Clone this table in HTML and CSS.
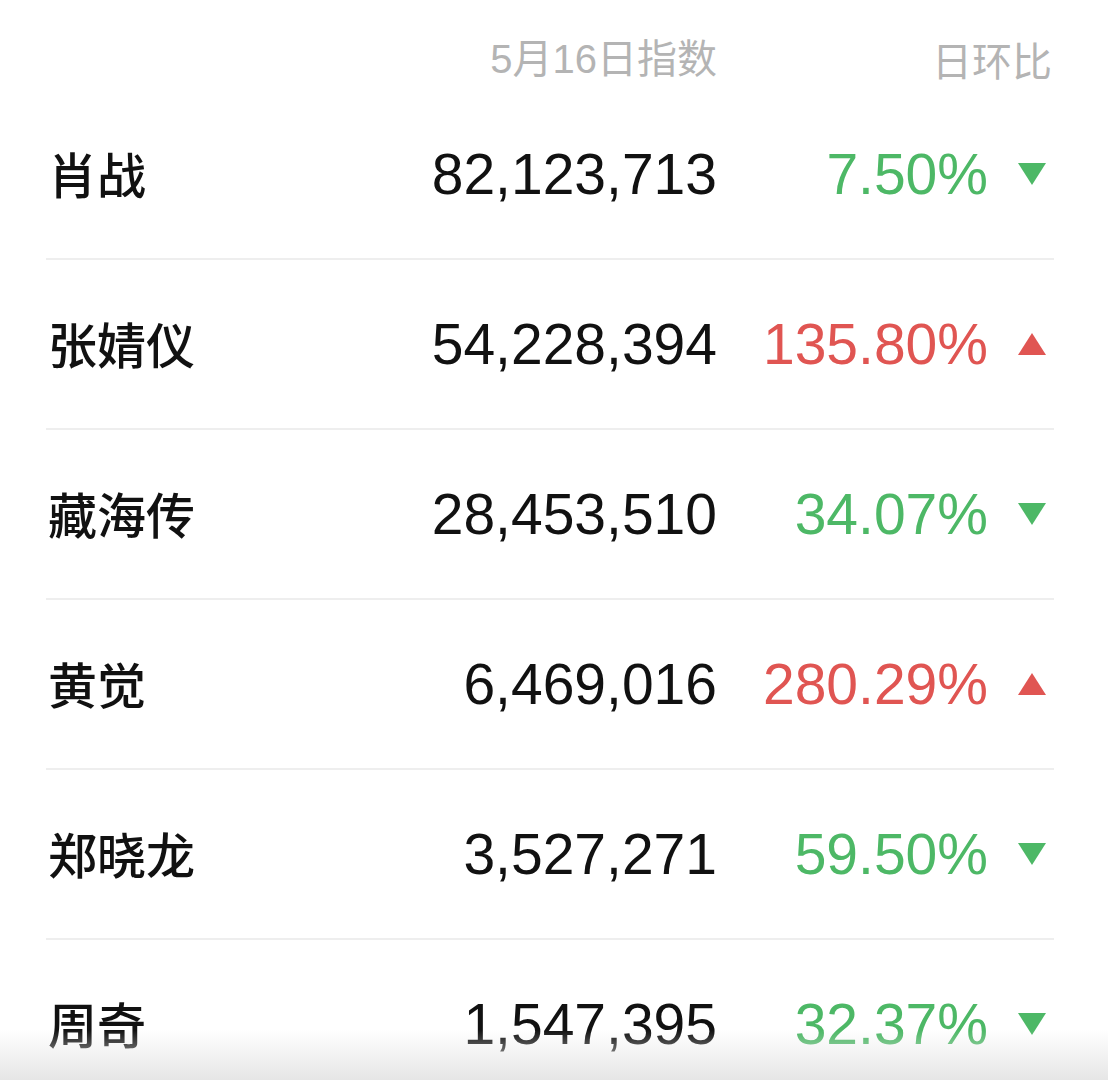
FILE: index.html
```html
<!DOCTYPE html>
<html>
<head>
    <title>指数</title>
    <link rel="stylesheet" href="styles.css">
</head>
<body>
    <div class="board">
        <div class="head">
            <span></span>
            <span class="head-num">5月16日指数</span>
            <span class="head-rate">日环比</span>
        </div>

        <div class="row">
            <span class="name">肖战</span>
            <span class="num">82,123,713</span>
            <span class="rate down">7.50%</span>
            <span class="arrow"><span class="tri down"></span></span>
        </div>
        <div class="row">
            <span class="name">张婧仪</span>
            <span class="num">54,228,394</span>
            <span class="rate up">135.80%</span>
            <span class="arrow"><span class="tri up"></span></span>
        </div>
        <div class="row">
            <span class="name">藏海传</span>
            <span class="num">28,453,510</span>
            <span class="rate down">34.07%</span>
            <span class="arrow"><span class="tri down"></span></span>
        </div>
        <div class="row">
            <span class="name">黄觉</span>
            <span class="num">6,469,016</span>
            <span class="rate up">280.29%</span>
            <span class="arrow"><span class="tri up"></span></span>
        </div>
        <div class="row">
            <span class="name">郑晓龙</span>
            <span class="num">3,527,271</span>
            <span class="rate down">59.50%</span>
            <span class="arrow"><span class="tri down"></span></span>
        </div>
        <div class="row last">
            <span class="name">周奇</span>
            <span class="num">1,547,395</span>
            <span class="rate down">32.37%</span>
            <span class="arrow"><span class="tri down"></span></span>
        </div>
    </div>
    <div class="fade"></div>
</body>
</html>
```

FILE: styles.css
```css
body {
    margin: 0;
    padding: 0;
    background-color: #fff;
    font-family: "Liberation Sans", "Noto Sans CJK SC", sans-serif;
    color: #111;
    width: 1108px;
    height: 1080px;
    overflow: hidden;
    position: relative;
}

.board {
    margin-left: 46px;
    width: 1008px;
}

.head,
.row {
    display: grid;
    grid-template-columns: 371px 300px 271px 66px;
    align-items: center;
}

.head {
    height: 62px;
    padding-top: 28px;
    font-family: "Noto Sans CJK SC", "Liberation Sans", sans-serif;
    font-size: 40px;
    line-height: 44px;
    color: #b4b4b4;
}

.head-num {
    text-align: right;
    font-family: "Liberation Sans", "Noto Sans CJK SC", sans-serif;
}

.head-rate {
    grid-column: 3 / 5;
    text-align: right;
    padding-right: 2px;
}

.row {
    height: 168px;
    border-bottom: 2px solid #eeeeee;
}

.row.last {
    border-bottom: none;
}

.name {
    font-family: "Noto Sans CJK SC", sans-serif;
    font-size: 49px;
    font-weight: 500;
    padding-left: 2px;
    position: relative;
    top: -2px;
}

.num {
    text-align: right;
    font-size: 57px;
}

.rate {
    text-align: right;
    font-size: 57px;
}

.rate.down {
    color: #4db866;
}

.rate.up {
    color: #e05552;
}

.arrow {
    padding-left: 30px;
    display: flex;
}

.tri {
    width: 0;
    height: 0;
    border-left: 14px solid transparent;
    border-right: 14px solid transparent;
}

.tri.down {
    border-top: 22px solid #4db866;
}

.tri.up {
    border-bottom: 22px solid #e05552;
}

.fade {
    position: absolute;
    left: 0;
    right: 0;
    bottom: 0;
    height: 50px;
    background: linear-gradient(to bottom, rgba(232, 232, 232, 0), #e6e6e6);
}
```
